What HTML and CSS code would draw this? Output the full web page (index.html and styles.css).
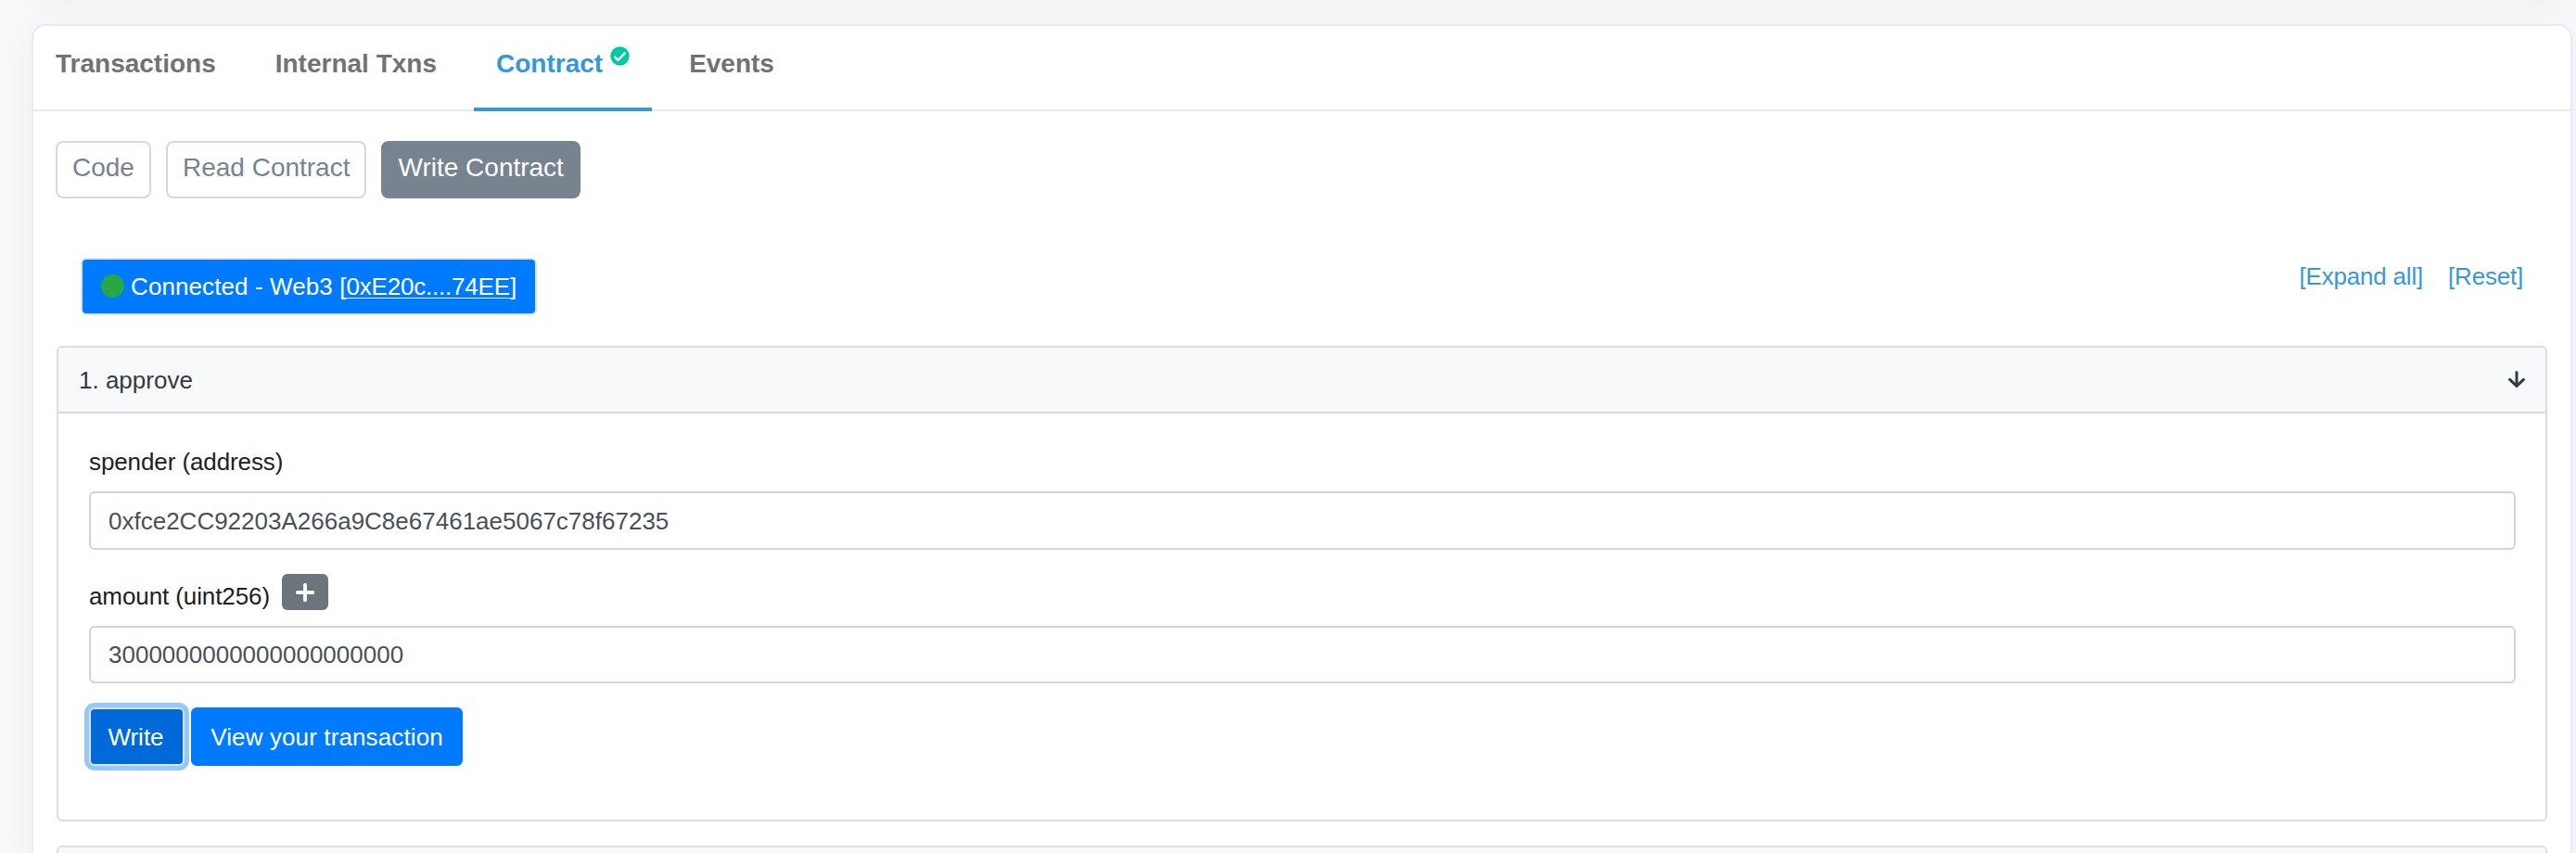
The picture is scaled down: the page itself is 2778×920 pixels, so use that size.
FILE: index.html
```html
<!DOCTYPE html>
<html lang="en">
<head>
<meta charset="utf-8">
<title>Write Contract</title>
<link rel="stylesheet" href="styles.css">
</head>
<body>
<main class="page">
  <section class="card card-above"></section>
  <section class="card card-main">
    <nav class="tabs">
      <a class="tab">Transactions</a>
      <a class="tab">Internal Txns</a>
      <a class="tab tab-active">Contract<svg class="check" viewBox="0 0 512 512"><circle cx="256" cy="256" r="248" fill="#00c9a7"/><path d="M112 266l94 94 196-196" fill="none" stroke="#fff" stroke-width="60"/></svg></a>
      <a class="tab">Events</a>
    </nav>
    <div class="content">
      <div class="pills">
        <a class="pill">Code</a>
        <a class="pill">Read Contract</a>
        <a class="pill pill-active">Write Contract</a>
      </div>
      <div class="toolbar">
        <button class="btn connect"><span class="dot"></span><span><span class="status">Connected - Web3 </span>[<span class="addr">0xE20c....74EE</span>]</span></button>
        <div class="links"><a>[Expand all]</a><a>[Reset]</a></div>
      </div>
      <article class="method">
        <header class="method-head">
          <span>1. approve</span>
          <svg class="arrow" viewBox="0 0 18 18"><path d="M9 1.5v14.5M1.6 9.3L9 16.4l7.4-7.1" fill="none" stroke="#343a40" stroke-width="3" stroke-linecap="round" stroke-linejoin="round"/></svg>
        </header>
        <div class="method-body">
          <label class="label">spender (address)</label>
          <input class="field field-spender" type="text" value="0xfce2CC92203A266a9C8e67461ae5067c78f67235">
          <div class="amount-row">
            <label class="label">amount (uint256)</label>
            <button class="plus"><svg viewBox="0 0 20 20"><path d="M10 1.7v16.6M1.7 10h16.6" stroke="#fff" stroke-width="3.8" stroke-linecap="round"/></svg></button>
          </div>
          <input class="field field-amount" type="text" value="3000000000000000000000">
          <div class="actions">
            <button class="btn write">Write</button>
            <button class="btn view">View your transaction</button>
          </div>
        </div>
      </article>
      <article class="method">
        <header class="method-head"></header>
      </article>
    </div>
  </section>
</main>
</body>
</html>
```

FILE: styles.css
```css
* { box-sizing: border-box; }

body {
  margin: 0;
  height: 920px;
  overflow: hidden;
  background: #f8f9fb;
  color: #1e2022;
  font: 26px/39px "Liberation Sans", Arial, sans-serif;
}

.page {
  height: 920px;
  padding: 0 4px 0 34px;
  overflow: hidden;
}

.card {
  background: #fff;
  border: 2px solid #e7eaf3;
  border-radius: 15px;
  box-shadow: 0 12px 36px rgba(120, 125, 125, .1);
}

.card-above {
  height: 96px;
  margin: -110px 0 40px;
}

.card-main {
  height: 894px;
  border-bottom: 0;
  border-bottom-left-radius: 0;
  border-bottom-right-radius: 0;
  overflow: hidden;
}

.tabs {
  display: flex;
  height: 92px;
  border-bottom: 2px solid #e7eaf3;
}

.tab {
  height: 92px;
  margin-right: 16px;
  padding: 20px 24px 0;
  font-size: 28px;
  line-height: 42px;
  font-weight: bold;
  color: #6f7277;
  white-space: nowrap;
}

.tab-active {
  color: #3498db;
  border-bottom: 4px solid #3498db;
}

.check {
  width: 21px;
  height: 21px;
  margin-left: 8px;
  vertical-align: 7px;
}

.content { padding: 32px 25px 0; }

.pills {
  display: flex;
  gap: 16px;
  margin-left: -1px;
}

.pill {
  height: 62px;
  padding: 6px 16px;
  border: 2px solid #d5dae2;
  border-radius: 8px;
  font-size: 28px;
  line-height: 42px;
  color: #77838f;
  white-space: nowrap;
}

.pill-active {
  color: #fff;
  background: #77838f;
  border-color: #77838f;
}

.toolbar {
  display: flex;
  justify-content: space-between;
  padding: 64px 26px 33px 27px;
}

.btn {
  font: inherit;
  color: #fff;
  background: #007bff;
  border: 2px solid #007bff;
  border-radius: 6px;
  white-space: nowrap;
}

.connect {
  display: flex;
  align-items: center;
  width: 492px;
  height: 62px;
  margin-left: -1px;
  padding: 0 0 0 19px;
  border-color: #dee2e6;
}

.dot {
  width: 25px;
  height: 25px;
  margin: 0 7px 2px 1px;
  border-radius: 50%;
  background: #28a745;
}

.status { letter-spacing: .1px; }

.addr {
  text-decoration: underline;
  text-decoration-thickness: 1px;
  text-underline-offset: 3px;
  letter-spacing: -.2px;
}

.links {
  display: flex;
  gap: 27px;
  padding-top: 1px;
  color: #3498db;
  letter-spacing: -.2px;
}

.method {
  margin-bottom: 26px;
  border: 2px solid #dcdddf;
  border-radius: 6px;
  overflow: hidden;
}

.method-head {
  display: flex;
  align-items: center;
  justify-content: space-between;
  height: 71px;
  padding: 1px 22px 0;
  background: #f8f9fb;
  border-bottom: 2px solid #d9dbdd;
  color: #343a40;
}

.arrow { width: 18px; height: 18px; margin-bottom: 2px; }

.method-body {
  height: 438px;
  padding: 33px 32px 0 33px;
}

.label {
  display: block;
  letter-spacing: -.1px;
}

.field {
  display: block;
  width: 100%;
  height: 63px;
  padding: 2px 19px 0;
  border: 2px solid #ced4da;
  border-radius: 6px;
  background: #fff;
  color: #495057;
  font: inherit;
}

.field-spender { margin-top: 12px; }

.amount-row {
  display: flex;
  gap: 13px;
  height: 65px;
  margin-top: 26px;
}

.amount-row .label { margin-top: 5px; }

.plus {
  display: flex;
  align-items: center;
  justify-content: center;
  width: 50px;
  height: 39px;
  padding: 0;
  border: 0;
  border-radius: 6px;
  background: #6c757d;
}

.plus svg { width: 20px; height: 20px; }

.field-amount {
  height: 62px;
  margin-top: -9px;
  padding-top: 1px;
}

.actions {
  display: flex;
  gap: 7px;
  margin-top: 26px;
}

.actions .btn { height: 63px; padding: 1px 19px 0; }

.actions .write {
  width: 103px;
  padding: 1px 20px 0 18px;
  background: #0069d9;
  border-color: #dee2e6;
  box-shadow: 0 0 0 5px #94c8ff;
}

.actions .view {
  width: 293px;
  letter-spacing: .12px;
}
```
